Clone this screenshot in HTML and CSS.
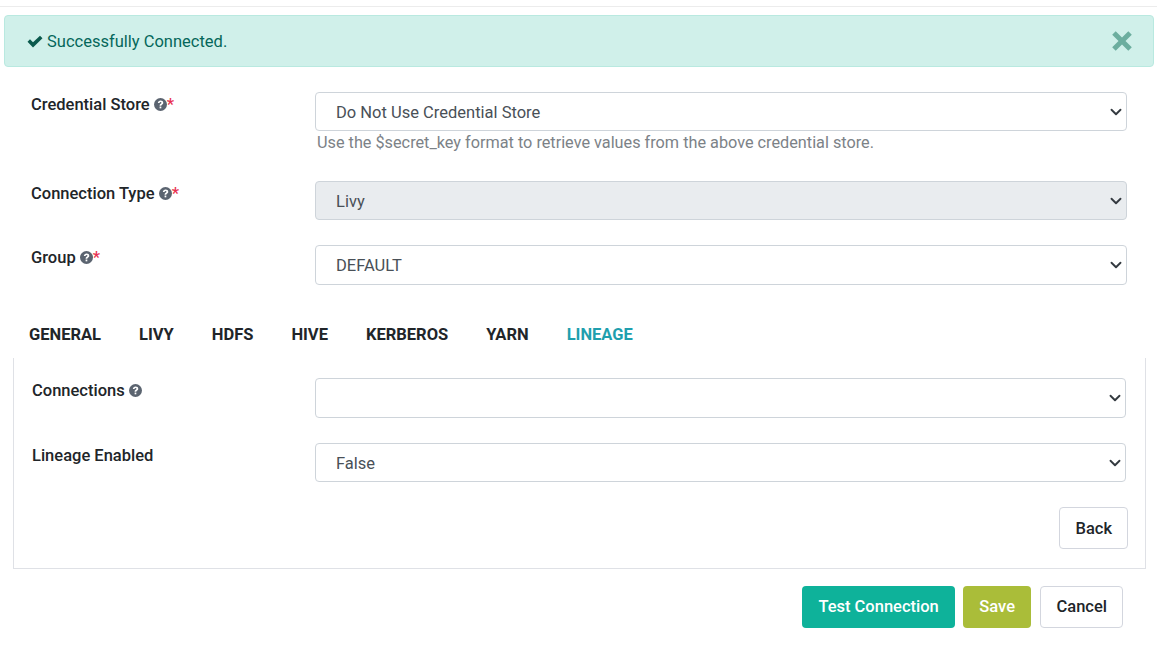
FILE: index.html
```html
<!DOCTYPE html>
<html lang="en">
<head>
    <meta charset="UTF-8">
    <title>Connection</title>
    <link rel="stylesheet" href="styles.css">
</head>
<body>
    <svg class="icon-defs" width="0" height="0" aria-hidden="true">
        <symbol id="help" viewBox="0 0 16 16">
            <circle cx="8" cy="8" r="8" fill="currentColor"/>
            <path d="M4.700 6C4.900 4.100 6.300 3 8.100 3c1.900 0 3.300 1.100 3.300 2.800 0 1.200-.7 1.900-1.500 2.400-.7.5-.9.8-.9 1.400H6.900c0-1.300.5-2 1.300-2.500.7-.5 1-.8 1-1.300 0-.5-.5-.9-1.100-.9-.7 0-1.200.5-1.300 1.200z" fill="#fff"/>
            <rect x="6.900" y="10.500" width="2.100" height="2.200" fill="#fff"/>
        </symbol>
    </svg>

    <div class="top-rule"></div>

    <div class="alert">
        <span class="alert-text">
            <svg class="alert-check" viewBox="0 0 16 13"><path d="M.5 6.800l2.500-2.500 3 3L13 .8l2.500 2.500L6 12.500z" fill="currentColor"/></svg>
            Successfully Connected.
        </span>
        <svg class="alert-close" viewBox="0 0 20 20"><path d="M3 5.500L5.500 3 10 7.500 14.500 3 17 5.500 12.500 10 17 14.500 14.500 17 10 12.500 5.500 17 3 14.500 7.500 10z" fill="currentColor"/></svg>
    </div>

    <form class="form">
        <div class="row row-store">
            <label class="label">Credential Store <svg class="help"><use href="#help"/></svg><span class="req">*</span></label>
            <div class="field">
                <select class="select"><option>Do Not Use Credential Store</option></select>
                <div class="hint">Use the $secret_key format to retrieve values from the above credential store.</div>
            </div>
        </div>
        <div class="row row-type">
            <label class="label">Connection Type <svg class="help"><use href="#help"/></svg><span class="req">*</span></label>
            <div class="field"><select class="select select-disabled"><option>Livy</option></select></div>
        </div>
        <div class="row row-group">
            <label class="label">Group <svg class="help"><use href="#help"/></svg><span class="req">*</span></label>
            <div class="field"><select class="select select-tall"><option>DEFAULT</option></select></div>
        </div>

        <div class="tabs">
            <a class="tab">GENERAL</a>
            <a class="tab">LIVY</a>
            <a class="tab">HDFS</a>
            <a class="tab">HIVE</a>
            <a class="tab">KERBEROS</a>
            <a class="tab">YARN</a>
            <a class="tab active">LINEAGE</a>
        </div>

        <div class="panel">
            <div class="row panel-row">
                <label class="label">Connections <svg class="help"><use href="#help"/></svg></label>
                <div class="field"><select class="select select-tall"><option></option></select></div>
            </div>
            <div class="row panel-row">
                <label class="label">Lineage Enabled</label>
                <div class="field"><select class="select"><option>False</option></select></div>
            </div>
            <div class="panel-actions">
                <button type="button" class="btn btn-light">Back</button>
            </div>
        </div>

        <div class="actions">
            <button type="button" class="btn btn-test">Test Connection</button>
            <button type="button" class="btn btn-save">Save</button>
            <button type="button" class="btn btn-light">Cancel</button>
        </div>
    </form>
</body>
</html>
```

FILE: styles.css
```css
/* General styling */
html, body {
    margin: 0;
    padding: 0;
    height: 100%;
    overflow: hidden;
}

body {
    background: #fff;
    color: #212529;
    font-family: Roboto, "Liberation Sans", sans-serif;
    font-size: 16.5px;
}

.icon-defs {
    position: absolute;
}

.top-rule {
    height: 1px;
    margin-top: 6px;
    background: #ececec;
}

/* Alert */
.alert {
    display: flex;
    align-items: center;
    justify-content: space-between;
    box-sizing: border-box;
    height: 52px;
    margin: 8px 3px 0 4px;
    padding: 0 17px 0 22px;
    background: #d0f0ea;
    border: 1px solid #b9e9e0;
    border-radius: 4px;
    color: #05675a;
}

.alert-text {
    display: flex;
    align-items: center;
    gap: 4px;
}

.alert-check {
    width: 16px;
    height: 13px;
    color: #0b5a4d;
}

.alert-close {
    width: 28px;
    height: 28px;
    color: #6cae9f;
}

/* Form rows */
.form {
    display: block;
}

.row {
    display: flex;
    align-items: flex-start;
}

.row-store {
    margin-top: 25px;
    padding: 0 30px 0 31px;
}

.row-type {
    margin-top: 29px;
    padding: 0 30px 0 31px;
}

.row-group {
    margin-top: 25px;
    padding: 0 30px 0 31px;
}

.label {
    flex: 0 0 284px;
    padding-top: 3px;
    font-weight: 500;
    line-height: 19px;
    white-space: nowrap;
}

.help {
    width: 13px;
    height: 13px;
    vertical-align: -1px;
    color: #5b6470;
}

.req {
    color: #e8304f;
}

.field {
    flex: 1;
}

.select {
    display: block;
    box-sizing: border-box;
    width: 100%;
    height: 39px;
    padding: 1px 36px 0 20px;
    appearance: none;
    background: #fff url("data:image/svg+xml,%3Csvg xmlns='http://www.w3.org/2000/svg' viewBox='0 0 16 16'%3E%3Cpath fill='none' stroke='%23343a40' stroke-linecap='round' stroke-linejoin='round' stroke-width='2.500' d='M2 5l6 6 6-6'/%3E%3C/svg%3E") no-repeat right 4px center / 12px 12px;
    border: 1px solid #ced4da;
    border-radius: 4px;
    color: #495057;
    font-family: inherit;
    font-size: 16.5px;
}

.select-tall {
    height: 40px;
    padding-top: 0;
}

.select-disabled {
    background-color: #e9ecef;
}

.hint {
    margin-top: 2px;
    padding-left: 2px;
    color: #7c8287;
    font-size: 16.25px;
    line-height: 19px;
}

/* Tabs */
.tabs {
    display: flex;
    gap: 38px;
    margin-top: 40px;
    padding-left: 29px;
    font-weight: 700;
    line-height: 19px;
}

.tab {
    color: #212529;
}

.tab.active {
    color: #1f9fae;
}

/* Tab panel */
.panel {
    box-sizing: border-box;
    height: 211px;
    margin: 14px 11px 0 13px;
    padding: 20px 19px 0 18px;
    border: 1px solid #dfe1e6;
    border-top: 0;
}

.panel-row {
    margin-bottom: 25px;
}

.panel-row .label {
    flex-basis: 283px;
}

.panel-actions {
    display: flex;
    justify-content: flex-end;
    margin-right: -2px;
}

.panel-actions .btn {
    padding-bottom: 0;
}

/* Buttons */
.btn {
    box-sizing: border-box;
    height: 42px;
    padding: 0 15px 1px;
    border: 1px solid transparent;
    border-radius: 4px;
    font-family: inherit;
    font-size: 16.5px;
    font-weight: 500;
}

.btn-light {
    background: #fff;
    border-color: #d3d6de;
    color: #212529;
}

.btn-test {
    background: #0eb29a;
    color: #fff;
}

.btn-save {
    margin-right: 1px;
    padding: 0 15.5px 1px;
    background: #aabd39;
    color: #fff;
}

.actions {
    display: flex;
    justify-content: flex-end;
    gap: 8px;
    margin: 17px 34px 0 0;
}
```
